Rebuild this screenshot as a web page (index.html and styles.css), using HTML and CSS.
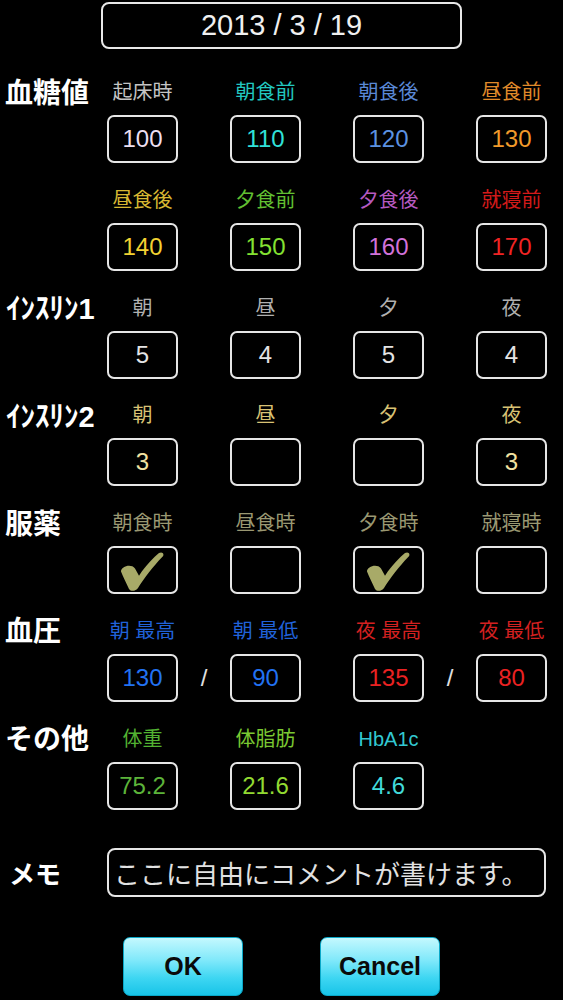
FILE: index.html
```html
<!DOCTYPE html>
<html lang="ja">
<head>
<meta charset="utf-8">
<title>記録</title>
<link rel="stylesheet" href="styles.css">
</head>
<body>
<div class="screen">
  <div class="date">2013 / 3 / 19</div>

  <section class="block first">
    <div class="rowlabel">血糖値</div>
    <div class="hd c1 t-wake">起床時</div>
    <div class="hd c2 t-bbf">朝食前</div>
    <div class="hd c3 t-abf">朝食後</div>
    <div class="hd c4 t-blu">昼食前</div>
    <div class="box c1 v-wake">100</div>
    <div class="box c2 v-bbf">110</div>
    <div class="box c3 v-abf">120</div>
    <div class="box c4 v-blu">130</div>
  </section>

  <section class="block">
    <div class="hd c1 t-alu">昼食後</div>
    <div class="hd c2 t-bdi">夕食前</div>
    <div class="hd c3 t-adi">夕食後</div>
    <div class="hd c4 t-bed">就寝前</div>
    <div class="box c1 v-alu">140</div>
    <div class="box c2 v-bdi">150</div>
    <div class="box c3 v-adi">160</div>
    <div class="box c4 v-bed">170</div>
  </section>

  <section class="block">
    <div class="rowlabel kana">ｲﾝｽﾘﾝ1</div>
    <div class="hd c1 t-ins1">朝</div>
    <div class="hd c2 t-ins1">昼</div>
    <div class="hd c3 t-ins1">夕</div>
    <div class="hd c4 t-ins1">夜</div>
    <div class="box c1 v-ins1">5</div>
    <div class="box c2 v-ins1">4</div>
    <div class="box c3 v-ins1">5</div>
    <div class="box c4 v-ins1">4</div>
  </section>

  <section class="block">
    <div class="rowlabel kana">ｲﾝｽﾘﾝ2</div>
    <div class="hd c1 t-ins2">朝</div>
    <div class="hd c2 t-ins2">昼</div>
    <div class="hd c3 t-ins2">夕</div>
    <div class="hd c4 t-ins2">夜</div>
    <div class="box c1 v-ins2">3</div>
    <div class="box c2 v-ins2"></div>
    <div class="box c3 v-ins2"></div>
    <div class="box c4 v-ins2">3</div>
  </section>

  <section class="block">
    <div class="rowlabel">服薬</div>
    <div class="hd c1 t-med">朝食時</div>
    <div class="hd c2 t-med">昼食時</div>
    <div class="hd c3 t-med">夕食時</div>
    <div class="hd c4 t-med">就寝時</div>
    <div class="box c1 checkbox">
      <svg class="check" viewBox="0 0 67 43" preserveAspectRatio="none"><path d="M12 23 C12 18 22 15 26 20 L30 27 C37 17 45 9 50 5 C54 3 56 7 53 9 C44 18 35 30 29 39 C27 42 22 43 20 40 C17 34 14 28 12 23 Z"/></svg>
    </div>
    <div class="box c2 checkbox"></div>
    <div class="box c3 checkbox">
      <svg class="check" viewBox="0 0 67 43" preserveAspectRatio="none"><path d="M12 23 C12 18 22 15 26 20 L30 27 C37 17 45 9 50 5 C54 3 56 7 53 9 C44 18 35 30 29 39 C27 42 22 43 20 40 C17 34 14 28 12 23 Z"/></svg>
    </div>
    <div class="box c4 checkbox"></div>
  </section>

  <section class="block">
    <div class="rowlabel">血圧</div>
    <div class="hd c1 t-am">朝 最高</div>
    <div class="hd c2 t-am">朝 最低</div>
    <div class="hd c3 t-pm">夜 最高</div>
    <div class="hd c4 t-pm">夜 最低</div>
    <div class="box c1 v-am">130</div>
    <div class="slash s1">/</div>
    <div class="box c2 v-am">90</div>
    <div class="box c3 v-pm">135</div>
    <div class="slash s2">/</div>
    <div class="box c4 v-pm">80</div>
  </section>

  <section class="block">
    <div class="rowlabel">その他</div>
    <div class="hd c1 t-wt">体重</div>
    <div class="hd c2 t-fat">体脂肪</div>
    <div class="hd c3 t-hb">HbA1c</div>
    <div class="box c1 v-wt">75.2</div>
    <div class="box c2 v-fat">21.6</div>
    <div class="box c3 v-hb">4.6</div>
  </section>

  <section class="memo">
    <div class="memolabel">メモ</div>
    <div class="memobox">ここに自由にコメントが書けます。</div>
  </section>

  <div class="buttons">
    <button class="btn">OK</button>
    <button class="btn">Cancel</button>
  </div>
</div>
</body>
</html>
```

FILE: styles.css
```css
html, body {
  margin: 0;
  padding: 0;
  background: #000;
}

.screen {
  width: 563px;
  height: 1000px;
  overflow: hidden;
  background: #000;
  font-family: "Liberation Sans", "Noto Sans CJK JP", sans-serif;
  color: #e8e8e8;
  padding-top: 2px;
  box-sizing: border-box;
}

.date {
  width: 361px;
  height: 47px;
  margin: 0 auto;
  box-sizing: border-box;
  border: 2.5px solid #e8e8e8;
  border-radius: 8px;
  display: flex;
  align-items: center;
  justify-content: center;
  font-size: 29px;
  color: #f0f0f0;
}

.block {
  display: grid;
  grid-template-columns: 107px 71px 52px 71px 52px 71px 52px 71px;
  grid-template-rows: 30px 48px;
  row-gap: 8px;
  margin-top: 21.8px;
}

.block.first {
  margin-top: 28px;
}

.rowlabel {
  grid-column: 1;
  grid-row: 1;
  padding-left: 5px;
  font-size: 28px;
  font-weight: bold;
  line-height: 30px;
  color: #fff;
  white-space: nowrap;
  align-self: center;
  margin-top: 3px;
}

.rowlabel.kana {
  font-size: 29px;
  padding-left: 6px;
}

.hd {
  grid-row: 1;
  font-size: 20px;
  line-height: 30px;
  text-align: center;
  white-space: nowrap;
  display: flex;
  justify-content: center;
}

.c1 { grid-column: 2; }
.c2 { grid-column: 4; }
.c3 { grid-column: 6; }
.c4 { grid-column: 8; }

.box {
  grid-row: 2;
  box-sizing: border-box;
  border: 2.5px solid #e6e6e6;
  border-radius: 7px;
  display: flex;
  align-items: center;
  justify-content: center;
  font-size: 24px;
  overflow: hidden;
}

.checkbox {
  padding: 0;
}

.check {
  width: 100%;
  height: 100%;
  display: block;
}

.check path {
  fill: #a8aa68;
}

.slash {
  grid-row: 2;
  display: flex;
  align-items: center;
  justify-content: center;
  font-size: 24px;
  color: #e0e0e0;
}

.s1 { grid-column: 3; }
.s2 { grid-column: 7; }

/* colours */
.t-wake { color: #c4c4c4; }
.v-wake { color: #ecdff0; }
.t-bbf { color: #22c8c0; }
.v-bbf { color: #30e2da; }
.t-abf { color: #5a88d6; }
.v-abf { color: #5c92e2; }
.t-blu { color: #e08a2a; }
.v-blu { color: #f29a2a; }
.t-alu { color: #d8b832; }
.v-alu { color: #f2d232; }
.t-bdi { color: #62c032; }
.v-bdi { color: #84e232; }
.t-adi { color: #b65ac0; }
.v-adi { color: #d272da; }
.t-bed { color: #d21a1a; }
.v-bed { color: #f02424; }
.t-ins1 { color: #b0b0b0; }
.v-ins1 { color: #e4e4e4; }
.t-ins2 { color: #d8c274; }
.v-ins2 { color: #f2e2a2; }
.t-med { color: #9a9872; }
.t-am { color: #2062da; }
.v-am { color: #2272f2; }
.t-pm { color: #d42020; }
.v-pm { color: #ea2222; }
.t-wt { color: #52b232; }
.v-wt { color: #5cb43a; }
.t-fat { color: #7ac832; }
.v-fat { color: #92da32; }
.t-hb { color: #32c8d2; }
.v-hb { color: #42dada; }

.memo {
  display: grid;
  grid-template-columns: 107px 439px;
  margin-top: 38px;
  align-items: center;
}

.memolabel {
  padding-left: 9px;
  font-size: 26px;
  font-weight: bold;
  color: #fff;
  white-space: nowrap;
}

.memobox {
  height: 49px;
  box-sizing: border-box;
  border: 2.5px solid #e6e6e6;
  border-radius: 8px;
  display: flex;
  align-items: center;
  padding-left: 5px;
  font-size: 26px;
  color: #e2e2e2;
  white-space: nowrap;
  overflow: hidden;
}

.buttons {
  display: flex;
  justify-content: center;
  gap: 77px;
  margin-top: 40px;
}

.btn {
  width: 120px;
  height: 59px;
  border: 1px solid #0aa8c8;
  border-radius: 7px;
  background: linear-gradient(to bottom, #c4f8fe 0%, #7ee8fa 40%, #3ed6f2 70%, #18c4e8 100%);
  font-family: "Liberation Sans", sans-serif;
  font-size: 25px;
  font-weight: bold;
  color: #0a0a0a;
  padding: 0;
}
```
